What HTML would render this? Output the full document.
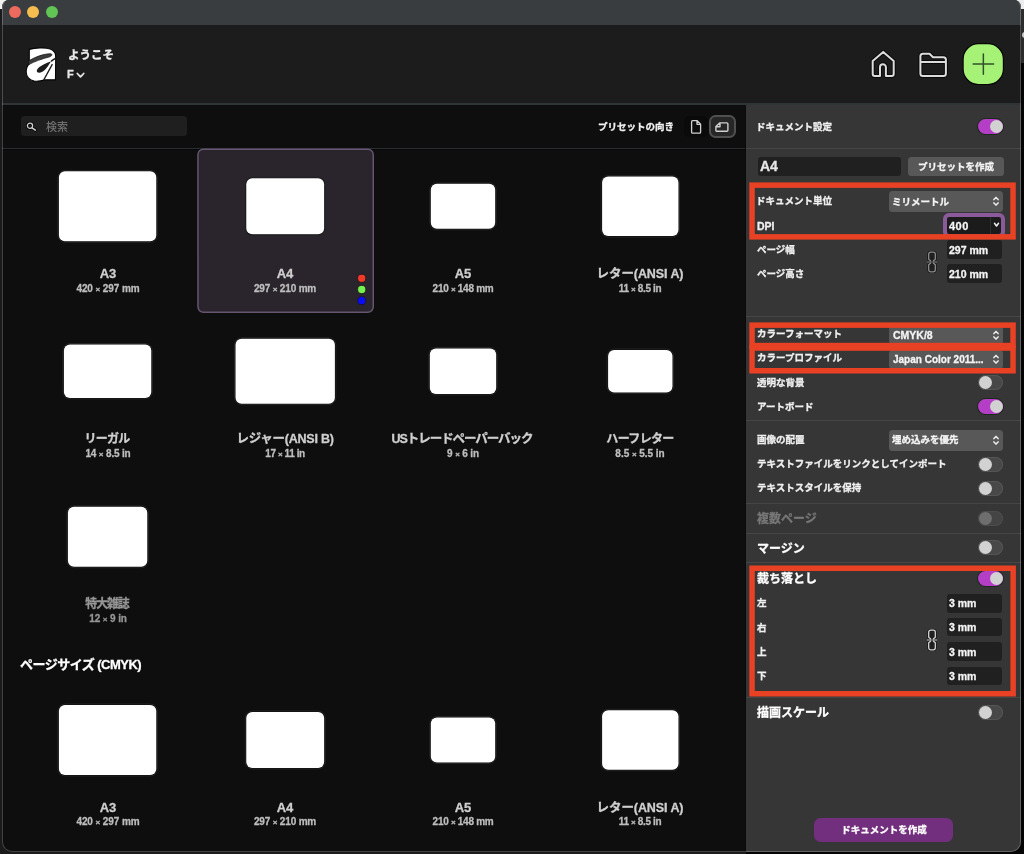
<!DOCTYPE html>
<html lang="ja"><head><meta charset="utf-8"><title>ようこそ</title>
<style>
*{box-sizing:border-box;margin:0;padding:0}
html,body{width:1024px;height:854px;overflow:hidden;background:#1b1b1b;font-family:"Liberation Sans","Noto Sans CJK JP",sans-serif;}
.abs,.t,.paper,.tog,.fld,.dd,.sep,.rb{position:absolute}
#win{position:absolute;left:2px;top:0;width:1019px;height:852px;border-radius:7px 7px 10px 10px;overflow:hidden;background:#0e0e0e}
#in{position:absolute;left:-2px;top:0;width:1024px;height:854px}
#edge{position:absolute;left:2px;top:0;width:1019px;height:852px;border-radius:7px 7px 10px 10px;border:1px solid rgba(255,255,255,.22);border-top-color:transparent;pointer-events:none}
.t{white-space:nowrap;line-height:1;transform:translateY(-50%);will-change:transform;-webkit-text-stroke:0.3px}
.t.r{-webkit-text-stroke:0}
.tc{transform:translate(-50%,-50%)}
.paper{background:#fff;border-radius:4px;box-shadow:0 0 0 1px #000,0 0 0 2px #222}
.tog{width:25px;height:15px;border-radius:7.5px;background:#484848;box-shadow:inset 0 0 0 1px #555}
.tog i{position:absolute;top:1px;left:0.5px;width:13px;height:13px;border-radius:6.5px;background:#d2d2d2}
.tog.on{background:#b53ec6;box-shadow:0 0 0 1px #1c2a1c}
.tog.on i{left:11.5px}
.tog.dim{background:#444;box-shadow:inset 0 0 0 1px #4c4c4c}.tog.dim i{background:#6e6e6e}
.fld{background:#202020;border-radius:3px}
.dd{background:#585858;border-radius:3.5px}
.sep{height:1px;background:#464646;left:746px;width:276px}
.rb{border:5.5px solid #e84124}
.x{font-size:.8em}
</style></head><body>

<div class="abs" style="left:746px;top:845px;width:278px;height:9px;background:#040404"></div>
<div class="abs" style="left:1005px;top:835px;width:19px;height:19px;background:#040404"></div>
<div class="abs" style="left:0;top:0;width:8px;height:9px;background:#f0f0f0"></div>
<div class="abs" style="left:1013px;top:0;width:11px;height:9px;background:#ececec"></div>
<div class="abs" style="left:1020px;top:9px;width:4px;height:54px;background:#2c2c2c"></div>
<div class="abs" style="left:1021.5px;top:32px;width:3px;height:6px;background:#c8c8c8;border-radius:3px 0 0 3px"></div>
<div class="abs" style="left:1020px;top:63px;width:4px;height:791px;background:#040404"></div>

<div id="win"><div id="in">
<div class="abs" style="left:0px;top:0px;width:1024px;height:25px;background:#3a3d3f"></div>
<div class="abs" style="left:8.75px;top:6px;width:12.0px;height:12px;background:#ed6a5e;border-radius:50%"></div>
<div class="abs" style="left:27.200000000000003px;top:6px;width:12.0px;height:12px;background:#f5bd4f;border-radius:50%"></div>
<div class="abs" style="left:46px;top:6px;width:12px;height:12px;background:#61c454;border-radius:50%"></div>
<div class="abs" style="left:0px;top:25px;width:1024px;height:78px;background:#1c1c1c"></div>
<div class="abs" style="left:0px;top:103px;width:1024px;height:1.5px;background:#2f3436"></div>
<svg class="abs" style="left:22px;top:42px" width="40" height="42" viewBox="0 0 813 854">
<path d="M148,150 C250,120 480,100 590,150 C660,185 695,240 685,330 L680,770 L465,770 C400,790 300,800 250,795 C150,780 85,700 85,610 C85,530 120,470 148,440 Z" fill="#fff" stroke="#050505" stroke-width="22" stroke-linejoin="round"/>
<path d="M128,392 C250,310 450,232 588,240 C622,248 610,284 560,302 C420,338 250,396 140,458 Z" fill="#3c3c3c" stroke="#141414" stroke-width="16" stroke-linejoin="round"/>
<path d="M590,390 C500,428 345,488 305,562 C282,622 345,640 405,610 C475,575 545,470 590,390 Z" fill="#1c1c1c"/>
<path d="M618,450 L440,775" stroke="#1a1a1a" stroke-width="26"/>
<path d="M705,312 C660,345 630,365 592,392" stroke="#1a1a1a" stroke-width="30" fill="none"/>
</svg>
<div class="t" style="left:68px;top:55.5px;font-size:11.5px;font-weight:700;color:#ececec;">ようこそ</div>
<div class="t" style="left:67.3px;top:74px;font-size:11px;font-weight:700;color:#e6e6e6;">F</div>
<svg class="abs" style="left:75.6px;top:71.6px" width="9" height="7" viewBox="0 0 9 7"><path d="M1.3 1.5 L4.5 4.9 L7.7 1.5" fill="none" stroke="#e6e6e6" stroke-width="1.8" stroke-linecap="round" stroke-linejoin="round"/></svg>
<svg class="abs" style="left:860px;top:40px" width="100" height="50" viewBox="0 0 100 50" fill="none" stroke-linejoin="round">
<path d="M12.7 34.1 V21 L23.2 11.9 L33.7 21 V34.1 A2 2 0 0 1 31.7 36.1 H25.9 V27.2 A2.95 2.95 0 0 0 20 27.2 V36.1 H14.7 A2 2 0 0 1 12.7 34.1 Z" stroke="#0a0a0a" stroke-width="4"/><path d="M60.4 16.2 A2.5 2.5 0 0 1 62.9 13.7 H69.5 L73 17.2 H83.4 A2.5 2.5 0 0 1 85.9 19.7 V33.6 A2.5 2.5 0 0 1 83.4 36.1 H62.9 A2.5 2.5 0 0 1 60.4 33.6 Z M60.4 22 H85.9" stroke="#0a0a0a" stroke-width="4"/>
<path d="M12.7 34.1 V21 L23.2 11.9 L33.7 21 V34.1 A2 2 0 0 1 31.7 36.1 H25.9 V27.2 A2.95 2.95 0 0 0 20 27.2 V36.1 H14.7 A2 2 0 0 1 12.7 34.1 Z" stroke="#dcdcdc" stroke-width="2"/><path d="M60.4 16.2 A2.5 2.5 0 0 1 62.9 13.7 H69.5 L73 17.2 H83.4 A2.5 2.5 0 0 1 85.9 19.7 V33.6 A2.5 2.5 0 0 1 83.4 36.1 H62.9 A2.5 2.5 0 0 1 60.4 33.6 Z M60.4 22 H85.9" stroke="#dcdcdc" stroke-width="2"/></svg>
<svg class="abs" style="left:955px;top:38px" width="60" height="54" viewBox="0 0 60 54"><rect x="8.1" y="5.7" width="40.3" height="40.8" rx="15.5" fill="#a6f277" stroke="#060606" stroke-width="1.2"/><path d="M18.2 25.9 H38.6 M28.35 15.9 V36.2" stroke="#33502a" stroke-width="1.5" stroke-linecap="round"/></svg>
<div class="abs" style="left:21px;top:116px;width:166px;height:20px;background:#1f1f1f;border-radius:3.5px"></div>
<svg class="abs" style="left:24px;top:119px" width="16" height="16" viewBox="0 0 16 16" fill="none" stroke-linecap="round"><circle cx="6" cy="6.8" r="2.6" stroke="#060606" stroke-width="3"/><path d="M8 8.8 L11.3 11.1" stroke="#060606" stroke-width="3.2"/><circle cx="6" cy="6.8" r="2.6" stroke="#cdcdcd" stroke-width="1.3"/><path d="M8 8.8 L11.3 11.1" stroke="#cdcdcd" stroke-width="1.6"/></svg>
<div class="t r" style="left:46.2px;top:126.6px;font-size:11px;font-weight:500;color:#727272;">検索</div>
<div class="t" style="left:597.7px;top:126.6px;font-size:9.5px;font-weight:700;color:#f2f2f2;">プリセットの向き</div>
<div class="abs" style="left:684px;top:116px;width:24px;height:21px;background:#0a0a0a;border-radius:5px"></div>
<svg class="abs" style="left:689px;top:118px" width="14" height="18" viewBox="0 0 14 18"><path d="M3.6 2.7 H8.2 L11.6 6.1 V14.2 A1 1 0 0 1 10.6 15.2 H3.6 A1 1 0 0 1 2.6 14.2 V3.7 A1 1 0 0 1 3.6 2.7 Z M8 2.9 V6.3 H11.4" fill="none" stroke="#d0d0d0" stroke-width="1.3" stroke-linejoin="round"/></svg>
<div class="abs" style="left:709px;top:115px;width:27px;height:23px;background:#262626;border:2px solid #505050;border-radius:6.5px"></div>
<svg class="abs" style="left:713px;top:120px" width="18" height="14" viewBox="0 0 18 14"><path d="M2.9 10.2 V6.4 L6.6 2.9 H13.9 A1 1 0 0 1 14.9 3.9 V10.2 A1 1 0 0 1 13.9 11.2 H3.9 A1 1 0 0 1 2.9 10.2 Z M3.1 6.7 H7 V3.1" fill="none" stroke="#cfcfcf" stroke-width="1.4" stroke-linejoin="round"/></svg>
<div class="abs" style="left:0px;top:148px;width:746px;height:1px;background:#2a2e30"></div>
<div class="abs" style="left:0px;top:149px;width:746px;height:1px;background:#070707"></div>
<svg class="abs" style="left:195px;top:146px" width="182" height="170" viewBox="195 146 182 170"><rect x="197.95" y="149.15" width="175.3" height="163.2" rx="5.5" fill="#2a242c" stroke="#65556e" stroke-width="1.5"/></svg>
<div class="t tc" style="left:107.6px;top:273.3px;font-size:13px;font-weight:700;color:#cfcfcf;">A3</div>
<div class="t tc" style="left:107.6px;top:288.6px;font-size:10px;font-weight:700;color:#bdbdbd;letter-spacing:-0.082px;margin-left:-0.041px;">420 <span class="x">×</span> 297 mm</div>
<div class="t tc" style="left:285.2px;top:273.3px;font-size:13px;font-weight:700;color:#cfcfcf;">A4</div>
<div class="t tc" style="left:285.2px;top:288.6px;font-size:10px;font-weight:700;color:#bdbdbd;letter-spacing:-0.164px;margin-left:-0.082px;">297 <span class="x">×</span> 210 mm</div>
<div class="t tc" style="left:463px;top:273.3px;font-size:13px;font-weight:700;color:#cfcfcf;">A5</div>
<div class="t tc" style="left:463px;top:288.6px;font-size:10px;font-weight:700;color:#bdbdbd;letter-spacing:-0.282px;margin-left:-0.141px;">210 <span class="x">×</span> 148 mm</div>
<div class="t tc" style="left:640.3px;top:274.3px;font-size:12.5px;font-weight:700;color:#cfcfcf;letter-spacing:-0.08px;margin-left:-0.04px;">レター(ANSI A)</div>
<div class="t tc" style="left:640.3px;top:288.6px;font-size:10px;font-weight:700;color:#bdbdbd;letter-spacing:-0.37px;margin-left:-0.185px;">11 <span class="x">×</span> 8.5 in</div>
<svg class="abs" style="left:355px;top:272px" width="14" height="36" viewBox="355 272 14 36"><circle cx="361.7" cy="278.3" r="4.1" fill="#f03a28" stroke="#1a1420" stroke-width="0.8"/><circle cx="361.7" cy="289.5" r="4.1" fill="#76f04c" stroke="#1a1420" stroke-width="0.8"/><circle cx="361.7" cy="300.7" r="4.1" fill="#0c0cf2" stroke="#1a1420" stroke-width="0.8"/></svg>
<div class="t tc" style="left:107.6px;top:439.2px;font-size:12px;font-weight:700;color:#cfcfcf;letter-spacing:-0.733px;margin-left:-0.3665px;">リーガル</div>
<div class="t tc" style="left:107.6px;top:453.5px;font-size:10px;font-weight:700;color:#bdbdbd;letter-spacing:-0.17px;margin-left:-0.085px;">14 <span class="x">×</span> 8.5 in</div>
<div class="t tc" style="left:285.2px;top:439.2px;font-size:12.5px;font-weight:700;color:#cfcfcf;letter-spacing:-0.236px;margin-left:-0.118px;">レジャー(ANSI B)</div>
<div class="t tc" style="left:285.2px;top:453.5px;font-size:10px;font-weight:700;color:#bdbdbd;letter-spacing:-0.411px;margin-left:-0.2055px;">17 <span class="x">×</span> 11 in</div>
<div class="t tc" style="left:463px;top:439.2px;font-size:12.5px;font-weight:700;color:#cfcfcf;letter-spacing:-1.058px;margin-left:-0.529px;">USトレードペーパーバック</div>
<div class="t tc" style="left:463px;top:453.5px;font-size:10px;font-weight:700;color:#bdbdbd;letter-spacing:-0.157px;margin-left:-0.0785px;">9 <span class="x">×</span> 6 in</div>
<div class="t tc" style="left:640.3px;top:439.2px;font-size:12px;font-weight:700;color:#cfcfcf;letter-spacing:-0.64px;margin-left:-0.32px;">ハーフレター</div>
<div class="t tc" style="left:640.3px;top:453.5px;font-size:10px;font-weight:700;color:#bdbdbd;letter-spacing:-0.036px;margin-left:-0.018px;">8.5 <span class="x">×</span> 5.5 in</div>
<div class="t tc" style="left:107.6px;top:603.8px;font-size:12px;font-weight:700;color:#969696;letter-spacing:-1.167px;margin-left:-0.5835px;">特大雑誌</div>
<div class="t tc" style="left:107.6px;top:619.0999999999999px;font-size:10px;font-weight:700;color:#969696;letter-spacing:-0.112px;margin-left:-0.056px;">12 <span class="x">×</span> 9 in</div>
<div class="t" style="left:20.4px;top:663.6px;font-size:13px;font-weight:700;color:#fff;letter-spacing:-0.525px;">ページサイズ (CMYK)</div>
<div class="t tc" style="left:107.6px;top:807px;font-size:13px;font-weight:700;color:#cfcfcf;">A3</div>
<div class="t tc" style="left:107.6px;top:822.3px;font-size:10px;font-weight:700;color:#bdbdbd;letter-spacing:-0.082px;margin-left:-0.041px;">420 <span class="x">×</span> 297 mm</div>
<div class="t tc" style="left:285.2px;top:807px;font-size:13px;font-weight:700;color:#cfcfcf;">A4</div>
<div class="t tc" style="left:285.2px;top:822.3px;font-size:10px;font-weight:700;color:#bdbdbd;letter-spacing:-0.164px;margin-left:-0.082px;">297 <span class="x">×</span> 210 mm</div>
<div class="t tc" style="left:463px;top:807px;font-size:13px;font-weight:700;color:#cfcfcf;">A5</div>
<div class="t tc" style="left:463px;top:822.3px;font-size:10px;font-weight:700;color:#bdbdbd;letter-spacing:-0.282px;margin-left:-0.141px;">210 <span class="x">×</span> 148 mm</div>
<div class="t tc" style="left:640.3px;top:808px;font-size:12.5px;font-weight:700;color:#cfcfcf;letter-spacing:-0.08px;margin-left:-0.04px;">レター(ANSI A)</div>
<div class="t tc" style="left:640.3px;top:822.3px;font-size:10px;font-weight:700;color:#bdbdbd;letter-spacing:-0.37px;margin-left:-0.185px;">11 <span class="x">×</span> 8.5 in</div>
<svg class="abs" style="left:0;top:150px" width="746" height="702" viewBox="0 150 746 702"><rect x="57.90" y="170.35" width="99.40" height="71.90" rx="7" fill="#000" stroke="#262626" stroke-width="1"/><rect x="58.90" y="171.35" width="97.40" height="69.90" rx="6" fill="#fff"/><rect x="245.25" y="177.35" width="79.90" height="57.90" rx="7" fill="#000" stroke="#262626" stroke-width="1"/><rect x="246.25" y="178.35" width="77.90" height="55.90" rx="6" fill="#fff"/><rect x="429.80" y="182.85" width="66.40" height="46.90" rx="7" fill="#000" stroke="#262626" stroke-width="1"/><rect x="430.80" y="183.85" width="64.40" height="44.90" rx="6" fill="#fff"/><rect x="601.10" y="175.60" width="78.40" height="61.40" rx="7" fill="#000" stroke="#262626" stroke-width="1"/><rect x="602.10" y="176.60" width="76.40" height="59.40" rx="6" fill="#fff"/><rect x="62.90" y="343.50" width="89.40" height="55.40" rx="7" fill="#000" stroke="#262626" stroke-width="1"/><rect x="63.90" y="344.50" width="87.40" height="53.40" rx="6" fill="#fff"/><rect x="234.50" y="337.75" width="101.40" height="66.90" rx="7" fill="#000" stroke="#262626" stroke-width="1"/><rect x="235.50" y="338.75" width="99.40" height="64.90" rx="6" fill="#fff"/><rect x="428.80" y="347.50" width="68.40" height="47.40" rx="7" fill="#000" stroke="#262626" stroke-width="1"/><rect x="429.80" y="348.50" width="66.40" height="45.40" rx="6" fill="#fff"/><rect x="607.10" y="349.00" width="66.40" height="44.40" rx="7" fill="#000" stroke="#262626" stroke-width="1"/><rect x="608.10" y="350.00" width="64.40" height="42.40" rx="6" fill="#fff"/><rect x="66.90" y="505.85" width="81.40" height="61.90" rx="7" fill="#000" stroke="#262626" stroke-width="1"/><rect x="67.90" y="506.85" width="79.40" height="59.90" rx="6" fill="#fff"/><rect x="57.90" y="704.05" width="99.40" height="71.90" rx="7" fill="#000" stroke="#262626" stroke-width="1"/><rect x="58.90" y="705.05" width="97.40" height="69.90" rx="6" fill="#fff"/><rect x="245.25" y="711.05" width="79.90" height="57.90" rx="7" fill="#000" stroke="#262626" stroke-width="1"/><rect x="246.25" y="712.05" width="77.90" height="55.90" rx="6" fill="#fff"/><rect x="429.80" y="716.55" width="66.40" height="46.90" rx="7" fill="#000" stroke="#262626" stroke-width="1"/><rect x="430.80" y="717.55" width="64.40" height="44.90" rx="6" fill="#fff"/><rect x="601.10" y="709.30" width="78.40" height="61.40" rx="7" fill="#000" stroke="#262626" stroke-width="1"/><rect x="602.10" y="710.30" width="76.40" height="59.40" rx="6" fill="#fff"/></svg>
<div class="abs" style="left:746px;top:104.5px;width:278px;height:749.5px;background:#363636"></div>
<div class="abs" style="left:744.5px;top:104.5px;width:1.5px;height:749.5px;background:#0a0a0a"></div>
<div class="t" style="left:755.6999999999999px;top:127.3px;font-size:9.5px;font-weight:700;color:#f0f0f0;">ドキュメント設定</div>
<div class="tog on" style="left:978.2px;top:119.1px"><i></i></div>
<div class="sep" style="top:148px"></div>
<div class="fld" style="left:757.5px;top:157px;width:143.5px;height:19px;"></div>
<div class="t" style="left:759.6px;top:166.0px;font-size:14px;font-weight:700;color:#e8e8e8;">A4</div>
<div class="dd" style="left:907.5px;top:157px;width:96.0px;height:19px;"></div>
<div class="t tc" style="left:955.8px;top:166.8px;font-size:9.5px;font-weight:700;color:#f4f4f4;">プリセットを作成</div>
<div class="t" style="left:755.6999999999999px;top:200.6px;font-size:9.5px;font-weight:700;color:#f0f0f0;">ドキュメント単位</div>
<div class="dd" style="left:888.7px;top:191px;width:114.5px;height:20.5px;"></div>
<div class="t" style="left:892.3px;top:201.55px;font-size:9.5px;font-weight:700;color:#f4f4f4;">ミリメートル</div>
<svg class="abs" style="left:991.5px;top:195.45px" width="8" height="12" viewBox="0 0 8 12"><path d="M1.9 4.6 L4 2.4 L6.1 4.6 M1.9 7.9 L4 10.1 L6.1 7.9" fill="none" stroke="#ececec" stroke-width="1.5" stroke-linecap="round" stroke-linejoin="round"/></svg>
<div class="t" style="left:757.3px;top:226.4px;font-size:10.5px;font-weight:700;color:#f0f0f0;">DPI</div>
<div class="abs" style="left:943px;top:213px;width:62px;height:25px;background:#1b1b1b;border:4px solid #8a5a9a;border-radius:6px"></div>
<div class="t" style="left:949.3px;top:226.2px;font-size:11px;font-weight:700;color:#f6f6f6;letter-spacing:0.5px;">400</div>
<div class="abs" style="left:990px;top:217px;width:1.2px;height:17px;background:#2e2e2e"></div>
<svg class="abs" style="left:993px;top:222.4px" width="7" height="6" viewBox="0 0 7 6"><path d="M1.5 1.3 L3.5 4 L5.5 1.3" fill="none" stroke="#f0f0f0" stroke-width="1.5" stroke-linecap="round" stroke-linejoin="round"/></svg>
<div class="t" style="left:757.3px;top:250.4px;font-size:9.5px;font-weight:700;color:#f0f0f0;">ページ幅</div>
<div class="fld" style="left:947px;top:240.4px;width:55px;height:18.4px;"></div>
<div class="t" style="left:949px;top:249.70000000000002px;font-size:10.5px;font-weight:700;color:#f4f4f4;">297 mm</div>
<div class="t" style="left:757.3px;top:274.2px;font-size:9.5px;font-weight:700;color:#f0f0f0;">ページ高さ</div>
<div class="fld" style="left:947px;top:264.3px;width:55px;height:18.5px;"></div>
<div class="t" style="left:949px;top:273.65000000000003px;font-size:10.5px;font-weight:700;color:#f4f4f4;">210 mm</div>
<svg class="abs" style="left:925.9px;top:250.7px" width="12" height="22" viewBox="0 0 12 22"><path d="M6 11 L2.7 8.2 V3.2 A2 2 0 0 1 4.7 1.2 H7.3 A2 2 0 0 1 9.3 3.2 V8.2 Z M6 11 L2.7 13.8 V18.8 A2 2 0 0 0 4.7 20.8 H7.3 A2 2 0 0 0 9.3 18.8 V13.8 Z" fill="#242424" stroke="#151515" stroke-width="2.8" stroke-linejoin="round"/><path d="M0.8 11 H4.6 M7.4 11 H11.2" stroke="#151515" stroke-width="2.6"/><path d="M6 11 L2.7 8.2 V3.2 A2 2 0 0 1 4.7 1.2 H7.3 A2 2 0 0 1 9.3 3.2 V8.2 Z M6 11 L2.7 13.8 V18.8 A2 2 0 0 0 4.7 20.8 H7.3 A2 2 0 0 0 9.3 18.8 V13.8 Z" fill="none" stroke="#8e8e8e" stroke-width="1.3" stroke-linejoin="round"/><path d="M0.8 11 H4.6 M7.4 11 H11.2" stroke="#8e8e8e" stroke-width="1.1"/><path d="M6 4.5 V17.5" stroke="#1c1c1c" stroke-width="1.2"/></svg>
<div class="sep" style="top:316px"></div>
<div class="t" style="left:757.3px;top:334.3px;font-size:9.5px;font-weight:700;color:#f0f0f0;">カラーフォーマット</div>
<div class="dd" style="left:888.7px;top:326px;width:114.5px;height:18px;"></div>
<div class="t" style="left:893px;top:335.4px;font-size:10.5px;font-weight:700;color:#f4f4f4;">CMYK/8</div>
<svg class="abs" style="left:991.5px;top:329.2px" width="8" height="12" viewBox="0 0 8 12"><path d="M1.9 4.6 L4 2.4 L6.1 4.6 M1.9 7.9 L4 10.1 L6.1 7.9" fill="none" stroke="#ececec" stroke-width="1.5" stroke-linecap="round" stroke-linejoin="round"/></svg>
<div class="t" style="left:757.3px;top:358.4px;font-size:9.5px;font-weight:700;color:#f0f0f0;">カラープロファイル</div>
<div class="dd" style="left:888.7px;top:350px;width:114.5px;height:18.5px;"></div>
<div class="t" style="left:893px;top:359.55px;font-size:10px;font-weight:700;color:#f4f4f4;">Japan Color 2011...</div>
<svg class="abs" style="left:991.5px;top:353.45px" width="8" height="12" viewBox="0 0 8 12"><path d="M1.9 4.6 L4 2.4 L6.1 4.6 M1.9 7.9 L4 10.1 L6.1 7.9" fill="none" stroke="#ececec" stroke-width="1.5" stroke-linecap="round" stroke-linejoin="round"/></svg>
<div class="t" style="left:757.3px;top:383px;font-size:9.5px;font-weight:700;color:#f0f0f0;">透明な背景</div>
<div class="tog" style="left:978.2px;top:375.4px"><i></i></div>
<div class="t" style="left:757.3px;top:406.8px;font-size:9.5px;font-weight:700;color:#f0f0f0;">アートボード</div>
<div class="tog on" style="left:978.2px;top:398.6px"><i></i></div>
<div class="sep" style="top:420px"></div>
<div class="t" style="left:757.3px;top:440.4px;font-size:9.5px;font-weight:700;color:#f0f0f0;">画像の配置</div>
<div class="dd" style="left:888.7px;top:429.5px;width:114.5px;height:21.3px;"></div>
<div class="t" style="left:892.3px;top:440.45px;font-size:9.5px;font-weight:700;color:#f4f4f4;">埋め込みを優先</div>
<svg class="abs" style="left:991.5px;top:434.34999999999997px" width="8" height="12" viewBox="0 0 8 12"><path d="M1.9 4.6 L4 2.4 L6.1 4.6 M1.9 7.9 L4 10.1 L6.1 7.9" fill="none" stroke="#ececec" stroke-width="1.5" stroke-linecap="round" stroke-linejoin="round"/></svg>
<div class="t" style="left:757.3px;top:464.2px;font-size:9.5px;font-weight:700;color:#f0f0f0;">テキストファイルをリンクとしてインポート</div>
<div class="tog" style="left:978.2px;top:457.1px"><i></i></div>
<div class="t" style="left:757.3px;top:488px;font-size:9.5px;font-weight:700;color:#f0f0f0;">テキストスタイルを保持</div>
<div class="tog" style="left:978.2px;top:480.7px"><i></i></div>
<div class="sep" style="top:503px"></div>
<div class="t" style="left:757.3px;top:519.2px;font-size:12px;font-weight:700;color:#777;">複数ページ</div>
<div class="tog dim" style="left:978.2px;top:510.5px"><i></i></div>
<div class="sep" style="top:533px"></div>
<div class="t" style="left:757.3px;top:548.7px;font-size:12px;font-weight:700;color:#fff;">マージン</div>
<div class="tog" style="left:978.2px;top:540.4px"><i></i></div>
<div class="sep" style="top:562px"></div>
<div class="t" style="left:757.3px;top:578.7px;font-size:12px;font-weight:700;color:#fff;">裁ち落とし</div>
<div class="tog on" style="left:978.2px;top:570.7px"><i></i></div>
<div class="t" style="left:757.3px;top:603.2px;font-size:9.5px;font-weight:700;color:#f0f0f0;">左</div>
<div class="fld" style="left:947px;top:594px;width:55px;height:18.5px;"></div>
<div class="t" style="left:949px;top:603.35px;font-size:10.5px;font-weight:700;color:#f4f4f4;">3 mm</div>
<div class="t" style="left:757.3px;top:627.7px;font-size:9.5px;font-weight:700;color:#f0f0f0;">右</div>
<div class="fld" style="left:947px;top:618.1px;width:55px;height:18.3px;"></div>
<div class="t" style="left:949px;top:627.35px;font-size:10.5px;font-weight:700;color:#f4f4f4;">3 mm</div>
<div class="t" style="left:757.3px;top:651.6px;font-size:9.5px;font-weight:700;color:#f0f0f0;">上</div>
<div class="fld" style="left:947px;top:642px;width:55px;height:18.9px;"></div>
<div class="t" style="left:949px;top:651.5500000000001px;font-size:10.5px;font-weight:700;color:#f4f4f4;">3 mm</div>
<div class="t" style="left:757.3px;top:675.8px;font-size:9.5px;font-weight:700;color:#f0f0f0;">下</div>
<div class="fld" style="left:947px;top:666.5px;width:55px;height:18.5px;"></div>
<div class="t" style="left:949px;top:675.85px;font-size:10.5px;font-weight:700;color:#f4f4f4;">3 mm</div>
<svg class="abs" style="left:925.5px;top:628.6px" width="12" height="22" viewBox="0 0 12 22"><path d="M6 11 L2.7 8.2 V3.2 A2 2 0 0 1 4.7 1.2 H7.3 A2 2 0 0 1 9.3 3.2 V8.2 Z M6 11 L2.7 13.8 V18.8 A2 2 0 0 0 4.7 20.8 H7.3 A2 2 0 0 0 9.3 18.8 V13.8 Z" fill="#242424" stroke="#151515" stroke-width="2.8" stroke-linejoin="round"/><path d="M0.8 11 H4.6 M7.4 11 H11.2" stroke="#151515" stroke-width="2.6"/><path d="M6 11 L2.7 8.2 V3.2 A2 2 0 0 1 4.7 1.2 H7.3 A2 2 0 0 1 9.3 3.2 V8.2 Z M6 11 L2.7 13.8 V18.8 A2 2 0 0 0 4.7 20.8 H7.3 A2 2 0 0 0 9.3 18.8 V13.8 Z" fill="none" stroke="#d6d6d6" stroke-width="1.3" stroke-linejoin="round"/><path d="M0.8 11 H4.6 M7.4 11 H11.2" stroke="#d6d6d6" stroke-width="1.1"/><path d="M6 4.5 V17.5" stroke="#1c1c1c" stroke-width="1.2"/></svg>
<div class="t" style="left:757.3px;top:712.5px;font-size:12px;font-weight:700;color:#fff;">描画スケール</div>
<div class="tog" style="left:978.2px;top:705.1px"><i></i></div>
<div class="sep" style="top:697px"></div>
<div class="abs" style="left:814px;top:818px;width:139.2px;height:23.8px;background:#722f7d;border-radius:6.5px"></div>
<div class="t tc" style="left:883.8px;top:830px;font-size:9.5px;font-weight:700;color:#fff;">ドキュメントを作成</div>
<svg class="abs" style="left:740px;top:170px" width="284" height="540" viewBox="0 0 284 540"><rect x="12.05" y="15.15" width="261.00" height="51.70" fill="none" stroke="#e84124" stroke-width="5.5"/><rect x="12.05" y="155.15" width="261.00" height="20.40" fill="none" stroke="#e84124" stroke-width="5.5"/><rect x="12.05" y="178.05" width="261.00" height="22.70" fill="none" stroke="#e84124" stroke-width="5.5"/><rect x="12.05" y="398.25" width="261.10" height="125.50" fill="none" stroke="#e84124" stroke-width="5.5"/></svg>
</div></div>
<div id="edge"></div>
</body></html>
